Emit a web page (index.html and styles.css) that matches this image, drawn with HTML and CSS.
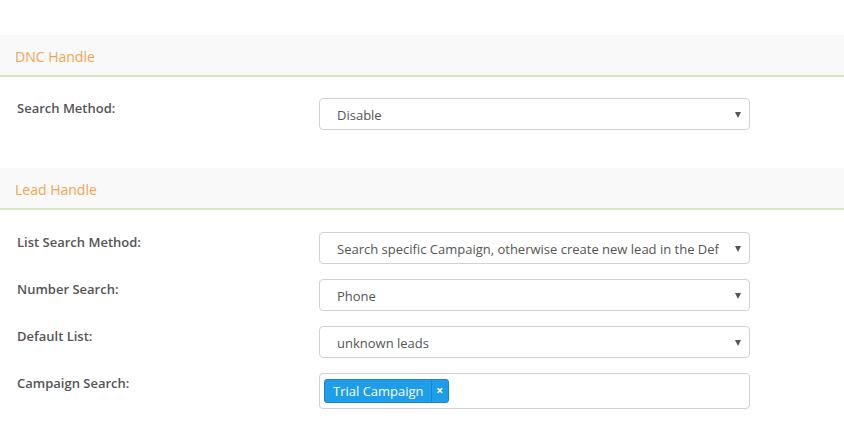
FILE: index.html
```html
<!DOCTYPE html>
<html>
<head>
<meta charset="utf-8">
<link rel="stylesheet" href="styles.css">
</head>
<body>
<div class="page">
  <section class="panel">
    <div class="panel-head">DNC Handle</div>
    <div class="panel-body">
      <div class="row">
        <div class="label">Search Method:</div>
        <div class="field"><div class="select">Disable<span class="caret"></span></div></div>
      </div>
    </div>
  </section>
  <section class="panel panel-2">
    <div class="panel-head">Lead Handle</div>
    <div class="panel-body">
      <div class="row">
        <div class="label">List Search Method:</div>
        <div class="field"><div class="select"><span class="val">Search specific Campaign, otherwise create new lead in the Default List</span><span class="caret"></span></div></div>
      </div>
      <div class="row">
        <div class="label">Number Search:</div>
        <div class="field"><div class="select">Phone<span class="caret"></span></div></div>
      </div>
      <div class="row">
        <div class="label">Default List:</div>
        <div class="field"><div class="select">unknown leads<span class="caret"></span></div></div>
      </div>
      <div class="row">
        <div class="label">Campaign Search:</div>
        <div class="field"><div class="multi"><span class="tag"><span class="tag-text">Trial Campaign</span><span class="tag-x">×</span></span></div></div>
      </div>
    </div>
  </section>
</div>
</body>
</html>
```
FILE: styles.css
```css
* { box-sizing: border-box; }
html, body { margin: 0; padding: 0; background: #fff; }
body {
  font-family: "Open Sans", "DejaVu Sans", sans-serif;
  font-size: 13px;
  color: #555;
}
.page { padding-top: 35px; }
.panel-head {
  height: 42px;
  background: #f9f9f9;
  border-bottom: 2px solid #d3e7c5;
  color: #f5a34f;
  font-size: 14px;
  line-height: 40px;
  padding: 2px 0 0 15px;
}
.panel-body { padding: 21px 0 0 0; }
.panel-2 { margin-top: 38px; }
.panel-2 .panel-body { padding-top: 22px; }
.row {
  display: grid;
  grid-template-columns: 302px 431px;
  padding-left: 17px;
  margin-bottom: 15px;
}
.label {
  font-weight: 600;
  line-height: 18px;
  padding-top: 1px;
}
.select {
  position: relative;
  height: 32px;
  border: 1px solid #d2d2d2;
  border-radius: 4px;
  padding: 0 30px 0 17px;
  line-height: 32px;
  color: #555;
  white-space: nowrap;
  overflow: hidden;
}
.val { display: block; overflow: hidden; white-space: nowrap; text-overflow: clip; }
.caret {
  position: absolute;
  right: 8px;
  top: 13px;
  width: 0; height: 0;
  border-left: 3.5px solid transparent;
  border-right: 3.5px solid transparent;
  border-top: 6px solid #555;
}
.multi {
  height: 36px;
  border: 1px solid #d2d2d2;
  border-radius: 4px;
  padding: 5px 4px;
}
.tag {
  display: inline-flex;
  height: 24px;
  background: #1e9de9;
  border: 1px solid #1a84cf;
  border-radius: 3px;
  color: #fff;
  line-height: 22px;
}
.tag-text { padding: 0 7px 0 8px; }
.tag-x {
  border-left: 1px solid #1a84cf;
  width: 17px;
  text-align: center;
  font-weight: 700;
  font-size: 12px;
}
```
